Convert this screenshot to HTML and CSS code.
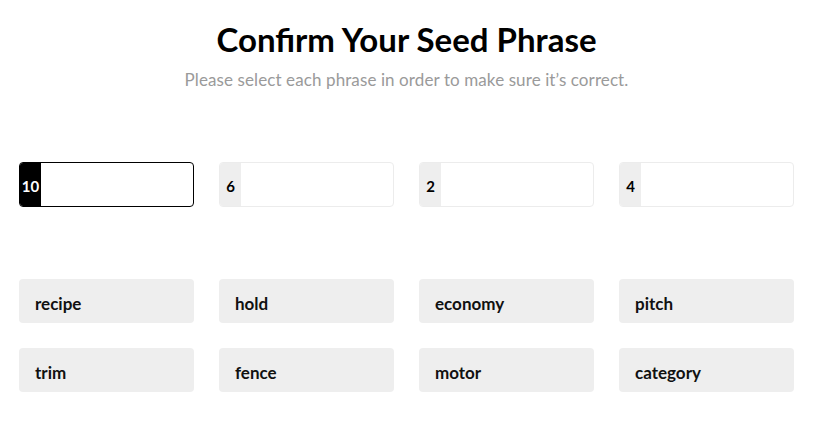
FILE: index.html
```html
<!DOCTYPE html>
<html>
<head>
<meta charset="utf-8">
<link rel="stylesheet" href="styles.css">
</head>
<body>
<div class="page">
  <h1 class="title">Confirm Your Seed Phrase</h1>
  <p class="subtitle">Please select each phrase in order to make sure it’s correct.</p>
  <div class="slots">
    <div class="slot active"><span class="num">10</span><span class="val"></span></div>
    <div class="slot"><span class="num">6</span><span class="val"></span></div>
    <div class="slot"><span class="num">2</span><span class="val"></span></div>
    <div class="slot"><span class="num">4</span><span class="val"></span></div>
  </div>
  <div class="words">
    <button class="word">recipe</button>
    <button class="word">hold</button>
    <button class="word">economy</button>
    <button class="word">pitch</button>
    <button class="word">trim</button>
    <button class="word">fence</button>
    <button class="word">motor</button>
    <button class="word">category</button>
  </div>
</div>
</body>
</html>
```

FILE: styles.css
```css
* { box-sizing: border-box; }
html, body { margin: 0; padding: 0; background: #fff; }
body { font-family: "Lato", "Inter", sans-serif; color: #000; }
.page { width: 775px; margin-left: 19px; padding-top: 19px; }
.title { margin: 0; text-align: center; font-size: 33px; font-weight: 700; line-height: 40px; letter-spacing: 0; }
.subtitle { margin: 11px 0 0; text-align: center; color: #9a9a9a; font-size: 17px; line-height: 20px; letter-spacing: 0.1px; }
.slots { display: grid; grid-template-columns: repeat(4, 175px); column-gap: 25px; margin-top: 72px; }
.slot { display: flex; height: 45px; border: 1px solid #ececec; border-radius: 4px; overflow: hidden; }
.slot.active { border-color: #000; }
.num { display: flex; align-items: center; justify-content: center; width: 21px; background: #eeeeee; font-weight: 700; font-size: 15px; padding-top: 2px; }
.slot.active .num { background: #000; color: #fff; }
.val { flex: 1; }
.words { display: grid; grid-template-columns: repeat(4, 175px); gap: 25px; margin-top: 72px; }
.word { height: 44px; border: none; border-radius: 4px; background: #eeeeee; text-align: left; padding: 4px 0 0 16px; font-family: "Lato", sans-serif; font-weight: 700; font-size: 17px; color: #111; }
```
